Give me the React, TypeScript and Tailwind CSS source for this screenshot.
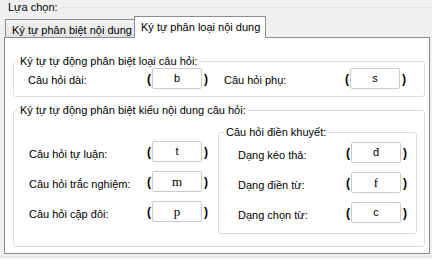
import { ReactNode } from 'react';

const font = { fontFamily: '"Liberation Sans", Arial, sans-serif' };

type GroupBoxProps = {
  legend: string;
  className?: string;
  legendClassName?: string;
  children: ReactNode;
};

const GroupBox = ({ legend, className, legendClassName, children }: GroupBoxProps) => (
  <div className={`relative rounded-[3px] border border-[#d5dfe5] ${className ?? ''}`}>
    <span
      className={`absolute -top-[8px] whitespace-nowrap bg-white px-[2px] leading-[14px] ${
        legendClassName ?? 'left-[4px]'
      }`}
    >
      {legend}
    </span>
    {children}
  </div>
);

const KeyBox = ({ ch, serif }: { ch: string; serif?: boolean }) => (
  <div className="flex shrink-0 items-center">
    <span className="w-[5px] shrink-0 text-[12px] font-bold leading-[14px]">(</span>
    <div
      className={`flex h-[21px] w-[50px] shrink-0 items-center justify-center rounded-[2px] border border-[#c9cdd3] bg-white ${
        serif ? 'text-[13px]' : ''
      }`}
      style={serif ? { fontFamily: '"Liberation Serif", serif' } : undefined}
    >
      {ch}
    </div>
    <span className="ml-[2px] text-[12px] font-bold leading-[14px]">)</span>
  </div>
);

type RowProps = {
  label: string;
  labelWidth: string;
  ch: string;
  serif?: boolean;
};

const Row = ({ label, labelWidth, ch, serif }: RowProps) => (
  <div className="flex h-[30px] items-center">
    <span className={`${labelWidth} shrink-0 whitespace-nowrap pt-[3px]`}>{label}</span>
    <div className="mb-[3px]">
      <KeyBox ch={ch} serif={serif} />
    </div>
  </div>
);

export default function App() {
  return (
    <div
      className="h-[259px] w-[432px] overflow-hidden bg-[#f0f0f0] text-[11px] text-black"
      style={font}
    >
      {/* outer group label */}
      <div className="flex h-[14px] items-center">
        <span className="pl-[8px] pr-[3px] leading-[14px]">Lựa chọn:</span>
        <div className="flex-1 border-t border-[#dfe3e6]" />
      </div>

      {/* tabs */}
      <div className="mt-[2px] flex h-[21px] items-end pl-[5px]">
        <div className="flex h-[18px] w-[129px] items-center whitespace-nowrap border-l border-t border-[#898c95] bg-gradient-to-b from-[#f3f3f3] to-[#e2e2e2] pl-[6px] pt-[3px]">
          Ký tự phân biệt nội dung
        </div>
        <div className="relative z-10 -mb-px flex h-[22px] w-[132px] items-start whitespace-nowrap border-x border-t border-[#898c95] bg-white pl-[6px] pt-[2px]">
          Ký tự phân loại nội dung
        </div>
      </div>

      {/* tab panel */}
      <div className="ml-[4px] h-[217px] w-[426px] border border-[#898c95] bg-white">
        <GroupBox legend="Ký tự tự động phân biệt loại câu hỏi:" className="ml-[8px] mr-[4px] mt-[23px] h-[36px]">
          <div className="flex h-[21px] items-center pl-[14px] pt-[12px]">
            <div className="flex w-[196px] items-center">
              <span className="w-[119px] shrink-0 pt-[3px]">Câu hỏi dài:</span>
              <KeyBox ch="b" />
            </div>
            <div className="flex items-center">
              <span className="w-[121px] shrink-0 pt-[3px]">Câu hỏi phụ:</span>
              <KeyBox ch="s" />
            </div>
          </div>
        </GroupBox>

        <GroupBox
          legend="Ký tự tự động phân biệt kiểu nội dung câu hỏi:"
          className="ml-[8px] mr-[4px] mt-[13px] h-[137px]"
        >
          <div className="flex">
            <div className="w-[204px] shrink-0 pl-[15px] pt-[27px]">
              <Row label="Câu hỏi tự luận:" labelWidth="w-[118px]" ch="t" />
              <Row label="Câu hỏi trắc nghiệm:" labelWidth="w-[118px]" ch="m" serif />
              <Row label="Câu hỏi cặp đôi:" labelWidth="w-[118px]" ch="p" serif />
            </div>
            <GroupBox
              legend="Câu hỏi điền khuyết:"
              className="mt-[21px] h-[102px] w-[199px] shrink-0"
              legendClassName="left-[5px]"
            >
              <div className="pl-[19px] pt-[6px]">
                <Row label="Dạng kéo thả:" labelWidth="w-[108px]" ch="đ" />
                <Row label="Dạng điền từ:" labelWidth="w-[108px]" ch="f" serif />
                <Row label="Dạng chọn từ:" labelWidth="w-[108px]" ch="c" />
              </div>
            </GroupBox>
          </div>
        </GroupBox>
      </div>

      <div className="mt-[2px] border-t border-[#dfe3e6]" />
    </div>
  );
}
